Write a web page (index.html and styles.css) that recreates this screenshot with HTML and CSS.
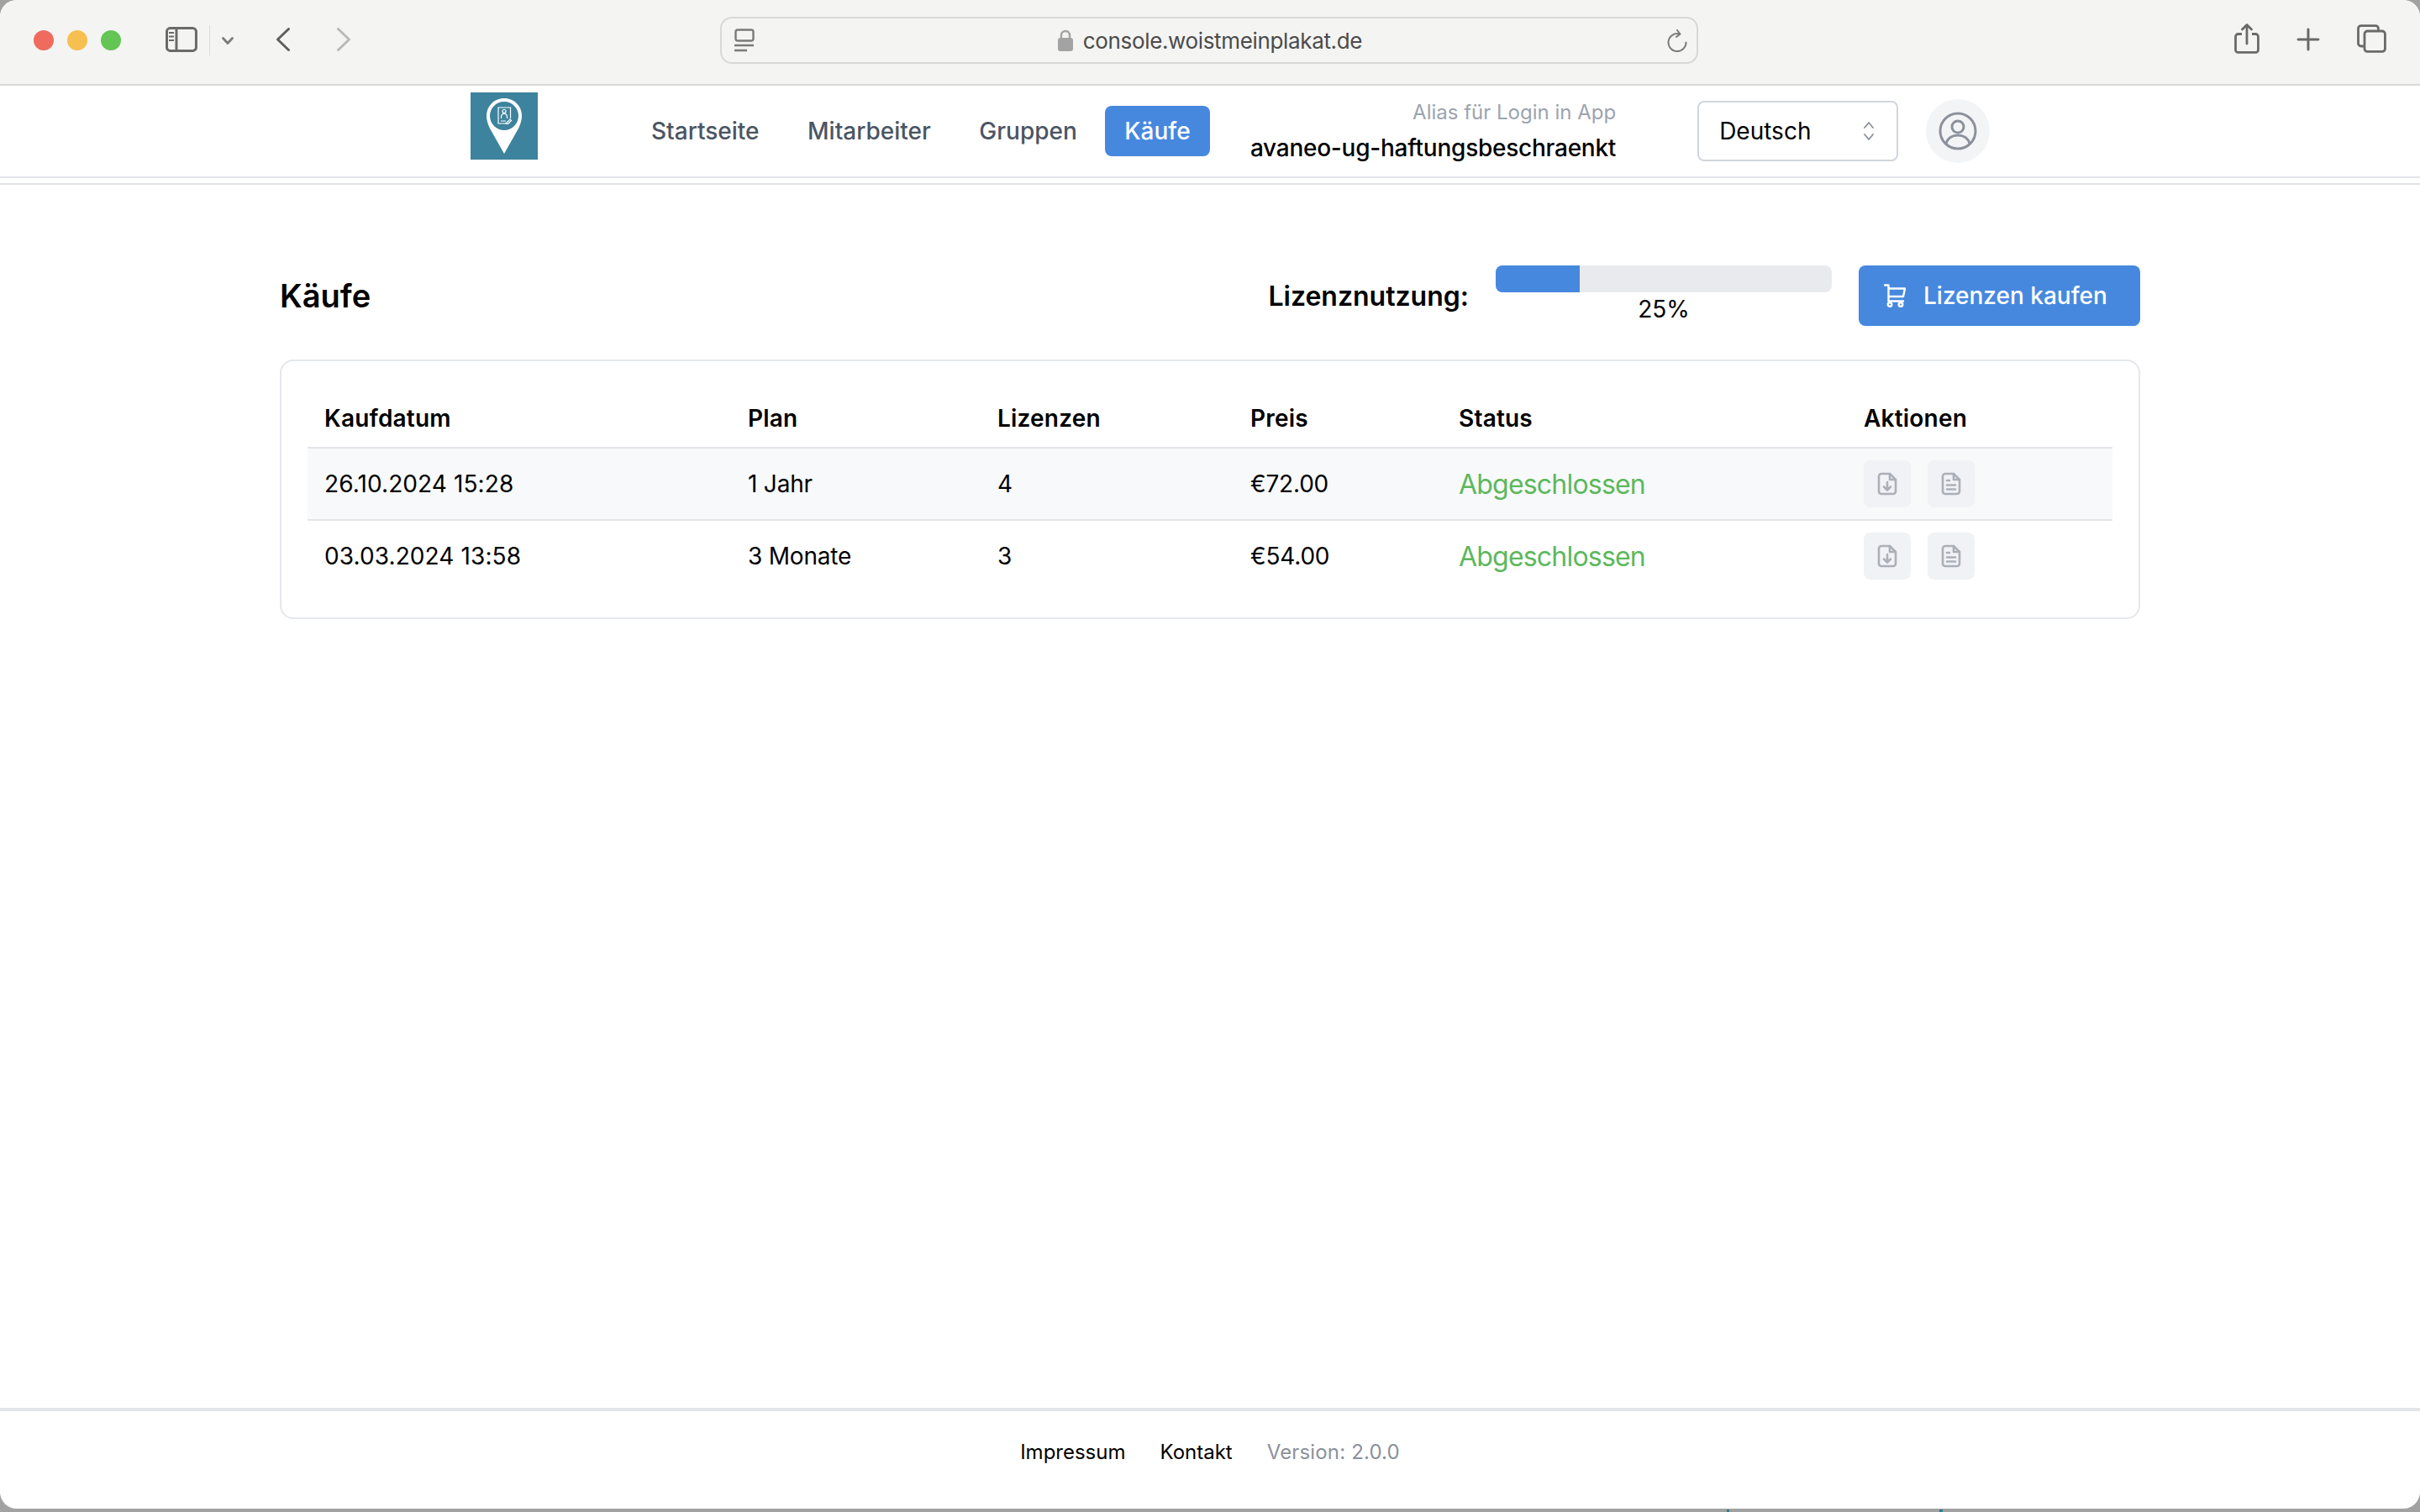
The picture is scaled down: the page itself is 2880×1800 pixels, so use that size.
FILE: index.html
```html
<!DOCTYPE html>
<html lang="de">
<head>
    <meta charset="UTF-8">
    <title>Käufe</title>
    <link rel="stylesheet" href="styles.css">
</head>
<body>
<div class="window">
    <div class="toolbar">
        <span class="light red"></span>
        <span class="light yellow"></span>
        <span class="light green"></span>
        <svg class="tb-sidebar" width="38" height="30" viewBox="0 0 38 30" fill="none" stroke="#6a6a6a" stroke-width="3">
            <rect x="1.5" y="1.5" width="35" height="27" rx="4"/>
            <path d="M13 2v26"/>
            <path d="M4 7h6M4 11.500h6M4 16h6" stroke-width="2"/>
        </svg>
        <span class="tb-sep"></span>
        <svg class="tb-chevron" width="14" height="9" viewBox="0 0 14 9" fill="none" stroke="#7c7c7c" stroke-width="2.800" stroke-linecap="round" stroke-linejoin="round"><path d="M1.5 1.5L7 7.5l5.500-6"/></svg>
        <svg class="tb-back" width="18" height="28" viewBox="0 0 18 28" fill="none" stroke="#5e5e5e" stroke-width="3" stroke-linecap="round" stroke-linejoin="round"><path d="M15.500 1.500L2.500 14l13 12.500"/></svg>
        <svg class="tb-forward" width="18" height="28" viewBox="0 0 18 28" fill="none" stroke="#b9b9b9" stroke-width="3" stroke-linecap="round" stroke-linejoin="round"><path d="M2.500 1.500L15.500 14l-13 12.500"/></svg>
        <div class="urlbar">
            <svg class="url-reader" width="24" height="28" viewBox="0 0 24 28" fill="none" stroke="#7a7a7a" stroke-width="2.400">
                <rect x="1.500" y="1.500" width="21" height="13" rx="2.500"/>
                <path d="M0 20h23M0 26h15"/>
            </svg>
            <div class="url-center">
                <svg width="18" height="26" viewBox="0 0 18 26"><path d="M4 11V7a5 5 0 0 1 10 0v4" fill="none" stroke="#a3a3a3" stroke-width="2.400"/><rect y="10" width="18" height="16" rx="3" fill="#a3a3a3"/></svg>
                <span class="url-text">console.woistmeinplakat.de</span>
            </div>
            <svg class="url-reload" width="24" height="27" viewBox="0 0 24 27" fill="none" stroke="#7a7a7a" stroke-width="2" stroke-linecap="round" stroke-linejoin="round"><path d="M15 5.500A10.500 10.500 0 1 0 22.500 15.500"/><path d="M12 1l3.500 4.500L11 9"/></svg>
        </div>
        <svg class="tb-share" width="30" height="36" viewBox="0 0 30 36" fill="none" stroke="#6a6a6a" stroke-width="2.800" stroke-linejoin="round"><path d="M9 12.500H4.500a3 3 0 0 0-3 3v16a3 3 0 0 0 3 3h21a3 3 0 0 0 3-3v-16a3 3 0 0 0-3-3H21"/><path d="M15 24V2M9.500 7L15 1.500 20.500 7" stroke-linecap="round"/></svg>
        <svg class="tb-plus" width="28" height="28" viewBox="0 0 28 28" stroke="#6a6a6a" stroke-width="3" stroke-linecap="round"><path d="M14 2v24M2 14h24"/></svg>
        <svg class="tb-tabs" width="35" height="34" viewBox="0 0 35 34" fill="none" stroke="#6a6a6a" stroke-width="2.800"><path d="M8 26H5a3.500 3.500 0 0 1-3.500-3.500V5A3.500 3.500 0 0 1 5 1.500h17A3.500 3.500 0 0 1 25.500 5v3"/><rect x="9" y="8" width="24.500" height="24.500" rx="3.500"/></svg>
    </div>

    <header class="header">
        <svg class="logo" width="80" height="80" viewBox="0 0 80 80">
            <rect width="80" height="80" fill="#3d839d"/>
            <path d="M40 7C28 7 19 16.500 19 28c0 5 1.500 9 3.500 14L40 73l17.500-31c2-5 3.500-9 3.500-14C61 16.500 52 7 40 7z" fill="#fff"/>
            <circle cx="40" cy="28" r="17" fill="#3d839d"/>
            <g fill="none" stroke="#fff" stroke-width="1.200">
                <path d="M47.500 31V18H33v19h9"/>
                <circle cx="40" cy="22.500" r="2"/>
                <path d="M36.500 31v-2a3.500 3.500 0 0 1 7 0v2M36 34h6M42 37l5-5 1.500 1.500-4 4z"/>
            </g>
        </svg>
        <nav class="nav">
            <a class="nav-link">Startseite</a>
            <a class="nav-link">Mitarbeiter</a>
            <a class="nav-link">Gruppen</a>
            <a class="nav-link active">Käufe</a>
        </nav>
        <div class="alias">
            <span class="alias-label">Alias für Login in App</span>
            <span class="alias-name">avaneo-ug-haftungsbeschraenkt</span>
        </div>
        <div class="lang-select">
            <span>Deutsch</span>
            <svg width="14" height="24" viewBox="0 0 14 24" fill="none" stroke="#8a8f98" stroke-width="1.800" stroke-linecap="round" stroke-linejoin="round"><path d="M2 8l5-6 5 6M2 16l5 6 5-6"/></svg>
        </div>
        <div class="avatar">
            <svg width="46" height="46" viewBox="0 0 46 46" fill="none" stroke="#8b919b" stroke-width="3">
                <circle cx="23" cy="23" r="21"/>
                <circle cx="23" cy="18" r="7"/>
                <path d="M9 38c2-7 8-10 14-10s12 3 14 10"/>
            </svg>
        </div>
    </header>
    <div class="header-rule"></div>

    <main class="main">
        <div class="title-row">
            <h1 class="title">Käufe</h1>
            <span class="usage-label">Lizenznutzung:</span>
            <div class="usage">
                <div class="bar"><div class="bar-fill" style="width: 25%"></div></div>
                <span class="usage-value">25%</span>
            </div>
            <button class="buy-btn">
                <svg width="26" height="28" viewBox="0 0 26 28" fill="none" stroke="#fff" stroke-width="2.400" stroke-linecap="round" stroke-linejoin="round">
                    <path d="M1 1.500h4.500v19H23M5.500 5.500H25l-2 9.500H5.500"/>
                    <circle cx="7" cy="24.500" r="2.300"/>
                    <circle cx="20" cy="24.500" r="2.300"/>
                </svg>
                Lizenzen kaufen
            </button>
        </div>

        <div class="card">
            <table class="table">
                <thead>
                    <tr>
                        <th class="col-date">Kaufdatum</th>
                        <th class="col-plan">Plan</th>
                        <th class="col-count">Lizenzen</th>
                        <th class="col-price">Preis</th>
                        <th class="col-status">Status</th>
                        <th>Aktionen</th>
                    </tr>
                </thead>
                <tbody>
                    <tr class="row-shaded">
                        <td class="date">26.10.2024 15:28</td>
                        <td>1 Jahr</td>
                        <td>4</td>
                        <td>€72.00</td>
                        <td class="status">Abgeschlossen</td>
                        <td>
                            <div class="actions">
                                <button class="icon-btn">
                                    <svg width="24" height="28" viewBox="0 0 24 28" fill="none" stroke="#abb0b8" stroke-width="2.600" stroke-linejoin="round" stroke-linecap="round"><path d="M15 2H5a3 3 0 0 0-3 3v18a3 3 0 0 0 3 3h14a3 3 0 0 0 3-3V9z"/><path d="M15 2v7h7"/><path d="M12 12v9M8 17.500l4 4 4-4"/></svg>
                                </button>
                                <button class="icon-btn">
                                    <svg width="24" height="28" viewBox="0 0 24 28" fill="none" stroke="#abb0b8" stroke-width="2.600" stroke-linejoin="round" stroke-linecap="round"><path d="M15 2H5a3 3 0 0 0-3 3v18a3 3 0 0 0 3 3h14a3 3 0 0 0 3-3V9z"/><path d="M15 2v7h7"/><path d="M7 10h3M7 15.500h10M7 20.500h10"/></svg>
                                </button>
                            </div>
                        </td>
                    </tr>
                    <tr>
                        <td class="date">03.03.2024 13:58</td>
                        <td>3 Monate</td>
                        <td>3</td>
                        <td>€54.00</td>
                        <td class="status">Abgeschlossen</td>
                        <td>
                            <div class="actions">
                                <button class="icon-btn">
                                    <svg width="24" height="28" viewBox="0 0 24 28" fill="none" stroke="#abb0b8" stroke-width="2.600" stroke-linejoin="round" stroke-linecap="round"><path d="M15 2H5a3 3 0 0 0-3 3v18a3 3 0 0 0 3 3h14a3 3 0 0 0 3-3V9z"/><path d="M15 2v7h7"/><path d="M12 12v9M8 17.500l4 4 4-4"/></svg>
                                </button>
                                <button class="icon-btn">
                                    <svg width="24" height="28" viewBox="0 0 24 28" fill="none" stroke="#abb0b8" stroke-width="2.600" stroke-linejoin="round" stroke-linecap="round"><path d="M15 2H5a3 3 0 0 0-3 3v18a3 3 0 0 0 3 3h14a3 3 0 0 0 3-3V9z"/><path d="M15 2v7h7"/><path d="M7 10h3M7 15.500h10M7 20.500h10"/></svg>
                                </button>
                            </div>
                        </td>
                    </tr>
                </tbody>
            </table>
        </div>
    </main>

    <footer class="footer">
        <a class="footer-link">Impressum</a>
        <a class="footer-link">Kontakt</a>
        <span class="version">Version: 2.0.0</span>
    </footer>
</div>
</body>
</html>
```

FILE: styles.css
```css
html, body {
    margin: 0;
    height: 100%;
}

body {
    font-family: Inter, "Noto Sans", sans-serif;
    color: #000;
    background:
        linear-gradient(#2f7f92, #2f7f92) 2055px 1797px / 3px 3px no-repeat,
        linear-gradient(#2f7f92, #2f7f92) 2308px 1797px / 4px 3px no-repeat,
        #a2a2a2;
    overflow: hidden;
}

.window {
    display: flex;
    flex-direction: column;
    height: 1796px;
    background-color: #fff;
    border-radius: 20px;
    overflow: hidden;
}

/* browser toolbar */
.toolbar {
    display: flex;
    align-items: center;
    flex-shrink: 0;
    height: 102px;
    padding: 0 40px 4px;
    box-sizing: border-box;
    background-color: #f4f4f2;
    border-bottom: 2px solid #d9d9d7;
}

.light {
    width: 24px;
    height: 24px;
    border-radius: 50%;
    margin-right: 16px;
}
.red { background-color: #ef6b5e; }
.yellow { background-color: #f6bf4f; }
.green { background-color: #62c554; }

.tb-sidebar { margin: 0 0 2px 37px; }
.tb-sep {
    width: 1px;
    height: 36px;
    margin-left: 14px;
    background-color: #dcdcda;
}
.tb-chevron { margin-left: 14px; }
.tb-back { margin: 0 0 2px 50px; }
.tb-forward { margin: 0 0 2px 54px; }

.urlbar {
    display: flex;
    align-items: center;
    justify-content: space-between;
    box-sizing: border-box;
    width: 1167px;
    height: 56px;
    margin-left: 439px;
    padding: 0 11px 0 15px;
    border: 2px solid #d8d8d6;
    border-radius: 14px;
}
.url-center {
    display: flex;
    align-items: center;
    gap: 12px;
    margin-left: -2px;
}
.url-text {
    font-size: 26px;
    letter-spacing: -0.35px;
    color: #4b4b4b;
}

.tb-share { margin: 0 0 4px 638px; }
.tb-plus { margin: 0 0 3px 44px; }
.tb-tabs { margin: 0 0 4px 44px; }

/* app header */
.header {
    display: flex;
    align-items: center;
    flex-shrink: 0;
    height: 108px;
    padding-left: 560px;
    border-bottom: 2px solid #e1e4e8;
}

.logo {
    align-self: flex-start;
    flex-shrink: 0;
    margin-top: 8px;
}

.nav {
    display: flex;
    gap: 9.5px;
    margin-left: 111px;
}
.nav-link {
    padding: 0 24px;
    line-height: 60px;
    font-size: 28px;
    font-weight: 500;
    color: #4b5563;
    border-radius: 8px;
}
.nav-link.active {
    padding: 0 23px;
    color: #fff;
    background-color: #4788df;
}

.alias {
    display: flex;
    flex-direction: column;
    align-items: flex-end;
    flex-shrink: 0;
    width: 440px;
    margin-left: 43.5px;
    white-space: nowrap;
}
.alias-label {
    font-size: 24px;
    color: #9ca3af;
}
.alias-name {
    margin-top: 11px;
    font-size: 28px;
    font-weight: 500;
    letter-spacing: -0.25px;
}

.lang-select {
    display: flex;
    align-items: center;
    justify-content: space-between;
    flex-shrink: 0;
    box-sizing: border-box;
    width: 239px;
    height: 72px;
    margin-left: 97px;
    padding: 0 26px 0 24px;
    border: 2px solid #d1d5db;
    border-radius: 8px;
    font-size: 28px;
}

.avatar {
    display: flex;
    align-items: center;
    justify-content: center;
    flex-shrink: 0;
    width: 76px;
    height: 76px;
    margin-left: 33px;
    border-radius: 50%;
    background-color: #f3f4f6;
}

.header-rule {
    flex-shrink: 0;
    height: 2px;
    margin-top: 6px;
    background-color: #e1e4e8;
}

/* page */
.main {
    flex: 1;
    padding: 96px 333px 0;
}

.title-row {
    display: flex;
    align-items: center;
    height: 72px;
}
.title {
    flex: 1;
    margin: 0;
    font-size: 38px;
    font-weight: 600;
}
.usage-label {
    font-size: 32px;
    font-weight: 600;
}
.usage {
    display: flex;
    flex-direction: column;
    align-items: center;
    align-self: flex-start;
    width: 400px;
    margin-left: 32px;
}
.bar {
    width: 100%;
    height: 32px;
    border-radius: 8px;
    background-color: #e9eaee;
    overflow: hidden;
}
.bar-fill {
    height: 100%;
    background-color: #4788df;
}
.usage-value {
    margin-top: 3px;
    font-size: 28px;
}
.buy-btn {
    display: flex;
    align-items: center;
    gap: 21px;
    box-sizing: border-box;
    width: 335px;
    height: 72px;
    margin-left: 32px;
    padding: 0 0 0 30px;
    border: 0;
    border-radius: 8px;
    background-color: #4788df;
    color: #fff;
    font-family: inherit;
    font-size: 28px;
    font-weight: 500;
}

.card {
    margin-top: 40px;
    padding: 33px 31px 31px;
    border: 2px solid #e5e7eb;
    border-radius: 16px;
}

.table {
    width: 100%;
    border-collapse: collapse;
    table-layout: fixed;
    font-size: 28px;
    letter-spacing: -0.2px;
}
.table th {
    box-sizing: border-box;
    height: 70px;
    padding: 0 20px;
    text-align: left;
    font-weight: 600;
    letter-spacing: 0.2px;
}
.table td {
    height: 84px;
    padding: 0 20px;
    border-top: 2px solid #e2e4e9;
}
.col-date { width: 504px; }
.col-plan { width: 297px; }
.col-count { width: 301px; }
.col-price { width: 248px; }
.col-status { width: 482px; }

.row-shaded { background-color: #f8f9fb; }
.table .date { letter-spacing: 0.1px; }
.table .status {
    font-size: 32px;
    letter-spacing: -0.8px;
    color: #5cb85c;
}

.actions {
    display: flex;
    gap: 20px;
}
.icon-btn {
    display: flex;
    align-items: center;
    justify-content: center;
    width: 56px;
    height: 56px;
    padding: 0;
    border: 0;
    border-radius: 8px;
    background-color: #f1f2f5;
}

.footer {
    display: flex;
    justify-content: center;
    align-items: center;
    gap: 41px;
    flex-shrink: 0;
    box-sizing: border-box;
    height: 120px;
    padding-bottom: 20px;
    border-top: 4px solid #e1e4e9;
    font-size: 24px;
}
.version {
    letter-spacing: 0.15px;
    color: #8b919b;
}
```
